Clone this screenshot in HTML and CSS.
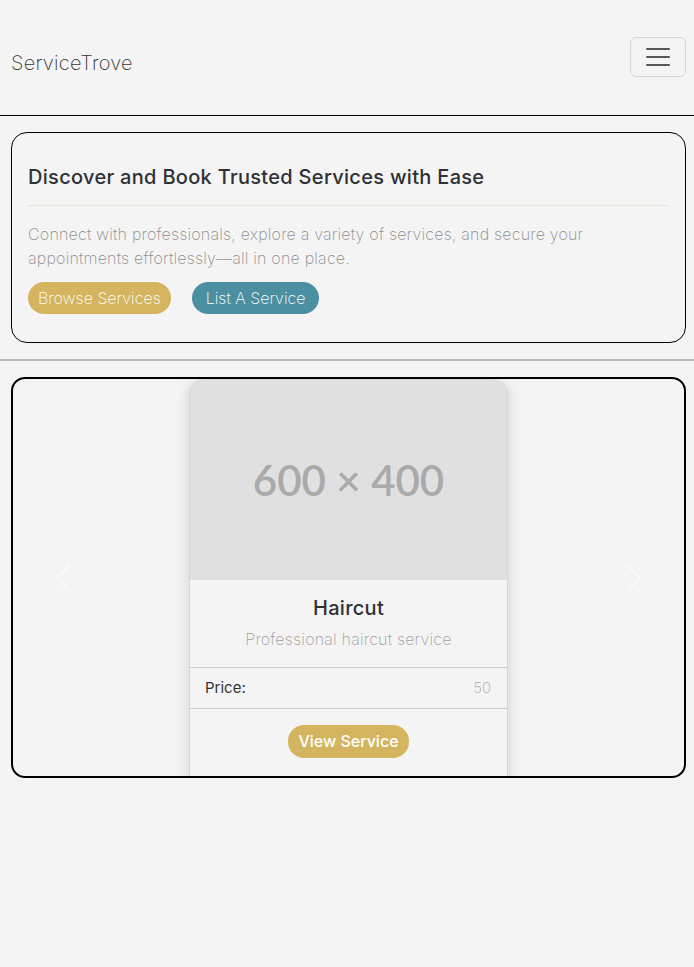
FILE: index.html
```html
<!DOCTYPE html>
<html lang="en">
<head>
<meta charset="utf-8">
<title>ServiceTrove</title>
<link rel="stylesheet" href="styles.css">
</head>
<body>
<header class="navbar">
  <a class="brand" href="#">ServiceTrove</a>
  <button class="toggler" type="button" aria-label="Toggle navigation">
    <svg class="toggler-icon" viewBox="0 0 30 30" width="30" height="30"><path stroke="rgba(33,37,41,0.75)" stroke-linecap="round" stroke-miterlimit="10" stroke-width="2" d="M4 7h22M4 15h22M4 23h22"/></svg>
  </button>
</header>
<main>
  <section class="hero">
    <h1 class="hero-title">Discover and Book Trusted Services with Ease</h1>
    <hr class="hero-rule">
    <p class="hero-text">Connect with professionals, explore a variety of services, and secure your appointments effortlessly—all in one place.</p>
    <div class="hero-actions">
      <a class="btn btn-gold" href="#">Browse Services</a>
      <a class="btn btn-teal" href="#">List A Service</a>
    </div>
  </section>
  <hr class="divider">
  <section class="carousel">
    <div class="card">
      <div class="card-img">600 × 400</div>
      <div class="card-body">
        <h2 class="card-title">Haircut</h2>
        <p class="card-sub">Professional haircut service</p>
      </div>
      <div class="card-row">
        <span class="label">Price:</span>
        <span class="value">50</span>
      </div>
      <div class="card-foot">
        <a class="btn btn-gold btn-strong" href="#">View Service</a>
      </div>
    </div>
    <button class="ctrl ctrl-prev" aria-label="Previous">
      <svg viewBox="0 0 16 16" width="32" height="32"><path fill="#fff" d="M11.354 1.646a.5.5 0 0 1 0 .708L5.707 8l5.647 5.646a.5.5 0 0 1-.708.708l-6-6a.5.5 0 0 1 0-.708l6-6a.5.5 0 0 1 .708 0z"/></svg>
    </button>
    <button class="ctrl ctrl-next" aria-label="Next">
      <svg viewBox="0 0 16 16" width="32" height="32"><path fill="#fff" d="M4.646 1.646a.5.5 0 0 1 .708 0l6 6a.5.5 0 0 1 0 .708l-6 6a.5.5 0 0 1-.708-.708L10.293 8 4.646 2.354a.5.5 0 0 1 0-.708z"/></svg>
    </button>
  </section>
</main>
</body>
</html>
```
FILE: styles.css
```css
* { box-sizing: border-box; }
body {
  margin: 0;
  background: #f4f4f4;
  font-family: "Inter", "Liberation Sans", sans-serif;
  color: #333;
}
.navbar {
  display: flex;
  justify-content: space-between;
  align-items: center;
  height: 116px;
  padding: 0 8px 0 11px;
  border-bottom: 1px solid #000;
}
.brand {
  font-size: 20px;
  font-weight: 200;
  letter-spacing: 0.25px;
  color: #333;
  text-decoration: none;
  margin-top: 10px;
}
.toggler {
  width: 56px;
  height: 40px;
  border: 1px solid rgba(0,0,0,0.12);
  border-radius: 6px;
  background: transparent;
  display: flex;
  align-items: center;
  justify-content: center;
  padding: 0;
  margin-top: -2px;
}
.toggler-icon { display: block; }
main { padding-top: 16px; }
.hero {
  margin: 0 8px 0 11px;
  border: 1px solid #000;
  border-radius: 16px;
  padding: 32px 16px 28px;
}
.hero-title {
  margin: 0;
  font-size: 20px;
  line-height: 24px;
  font-weight: 500;
  letter-spacing: 0.3px;
  color: #2f3034;
}
.hero-rule {
  border: 0;
  border-top: 1px solid #ebe4d6;
  margin: 16px 0;
}
.hero-text {
  margin: 0 0 12px;
  font-size: 16px;
  line-height: 24px;
  font-weight: 200;
  letter-spacing: 0.2px;
  color: #8e8e8e;
}
.hero-actions { display: flex; gap: 21px; }
.btn {
  display: inline-block;
  padding: 4px 10px;
  font-size: 16px;
  line-height: 24px;
  font-weight: 200;
  color: #fff;
  text-decoration: none;
  border-radius: 16px;
}
.btn-gold { background: #d4b45e; }
.btn-teal { background: #4b8fa3; padding: 4px 14px; }
.btn-strong { font-weight: 500; line-height: 25px; }
.divider {
  margin: 16px 0;
  border: 0;
  border-top: 2px solid #bbb;
}
.carousel {
  position: relative;
  margin: 0 8px 0 11px;
  height: 401px;
  border: 2px solid #000;
  border-radius: 14px;
  overflow: hidden;
}
.card {
  width: 319px;
  margin: 0 auto;
  border: 1px solid #d6d6d6;
  border-radius: 14px 14px 0 0;
  overflow: hidden;
  box-shadow: 0 4px 14px rgba(0,0,0,0.15);
  background: #f4f4f4;
}
.card-img {
  height: 200px;
  background: #e0e0e0;
  color: #aaa;
  display: flex;
  align-items: center;
  justify-content: center;
  font-family: "Lato", sans-serif;
  font-size: 42px;
  font-weight: 600;
}
.card-body {
  padding: 16px 16px 16px;
  text-align: center;
}
.card-title {
  margin: 0 0 7px;
  font-size: 20px;
  line-height: 24px;
  font-weight: 500;
  letter-spacing: 0.3px;
  color: #2f3034;
}
.card-sub {
  margin: 0;
  font-size: 16px;
  line-height: 24px;
  font-weight: 200;
  letter-spacing: 0.2px;
  color: #a0a0a0;
}
.card-row {
  display: flex;
  justify-content: space-between;
  padding: 8px 16px 8px 15px;
  border-top: 1px solid #ccc;
  border-bottom: 1px solid #ccc;
  font-size: 15px;
  line-height: 24px;
}
.label { color: #333; }
.value { color: #aaa; font-weight: 200; }
.card-foot {
  padding: 16px 16px 40px;
  text-align: center;
}
.ctrl {
  position: absolute;
  top: 0;
  bottom: 0;
  width: 15%;
  border: 0;
  background: transparent;
  padding: 0;
  display: flex;
  align-items: center;
  justify-content: center;
  opacity: 0.5;
}
.ctrl-prev { left: 0; }
.ctrl-next { right: 0; }
```
